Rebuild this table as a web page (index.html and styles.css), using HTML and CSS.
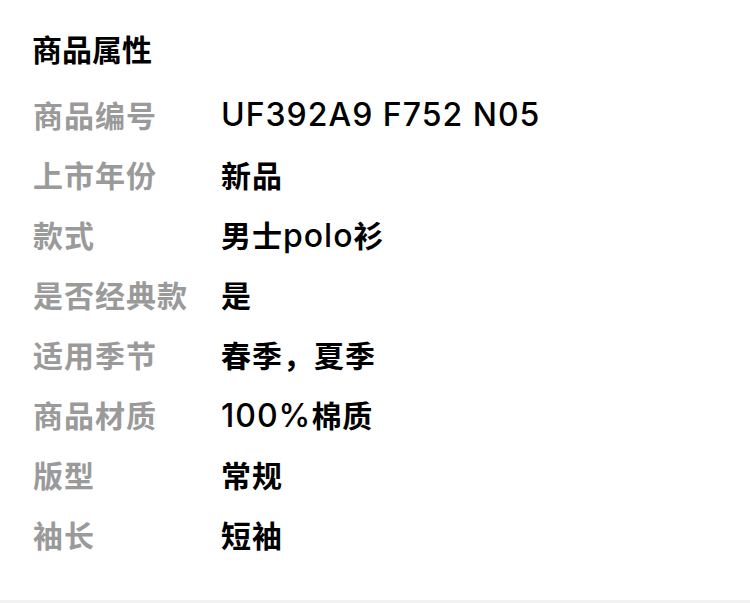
FILE: index.html
```html
<!DOCTYPE html>
<html lang="zh-CN">
<head>
    <meta charset="UTF-8">
    <meta name="viewport" content="width=device-width, initial-scale=1.0">
    <title>商品属性</title>
    <link rel="stylesheet" href="styles.css">
</head>
<body>

    <div class="attrs">
        <h2 class="attrs-title">商品属性</h2>
        <div class="attr-row">
            <span class="attr-label">商品编号</span>
            <span class="attr-value"><span class="latin">UF392A9 F752 N05</span></span>
        </div>
        <div class="attr-row">
            <span class="attr-label">上市年份</span>
            <span class="attr-value">新品</span>
        </div>
        <div class="attr-row">
            <span class="attr-label">款式</span>
            <span class="attr-value">男士<span class="latin">polo</span>衫</span>
        </div>
        <div class="attr-row">
            <span class="attr-label">是否经典款</span>
            <span class="attr-value">是</span>
        </div>
        <div class="attr-row">
            <span class="attr-label">适用季节</span>
            <span class="attr-value">春季，夏季</span>
        </div>
        <div class="attr-row">
            <span class="attr-label">商品材质</span>
            <span class="attr-value"><span class="latin">100%</span>棉质</span>
        </div>
        <div class="attr-row">
            <span class="attr-label">版型</span>
            <span class="attr-value">常规</span>
        </div>
        <div class="attr-row">
            <span class="attr-label">袖长</span>
            <span class="attr-value">短袖</span>
        </div>
    </div>
    <div class="divider"></div>

</body>
</html>
```

FILE: styles.css
```css
body {
    margin: 0;
    background-color: #fff;
    font-family: "Inter", "Noto Sans CJK SC", sans-serif;
    color: #000;
}
.attrs {
    height: 600px;
    box-sizing: border-box;
    padding: 30px 32px 0 33px;
}
.attrs-title {
    margin: 0 0 14px -1px;
    font-size: 30px;
    line-height: 40px;
    font-weight: 700;
}
.attr-row {
    display: flex;
    align-items: center;
    height: 60px;
}
.attr-label {
    width: 188px;
    flex-shrink: 0;
    font-size: 30px;
    font-weight: 700;
    letter-spacing: 1px;
    color: #9a9a9a;
}
.attr-value {
    font-size: 30px;
    font-weight: 700;
    letter-spacing: 1px;
}
.latin {
    font-size: 32px;
    font-weight: 500;
}
.divider {
    height: 3px;
    background-color: #f2f2f2;
}
```
